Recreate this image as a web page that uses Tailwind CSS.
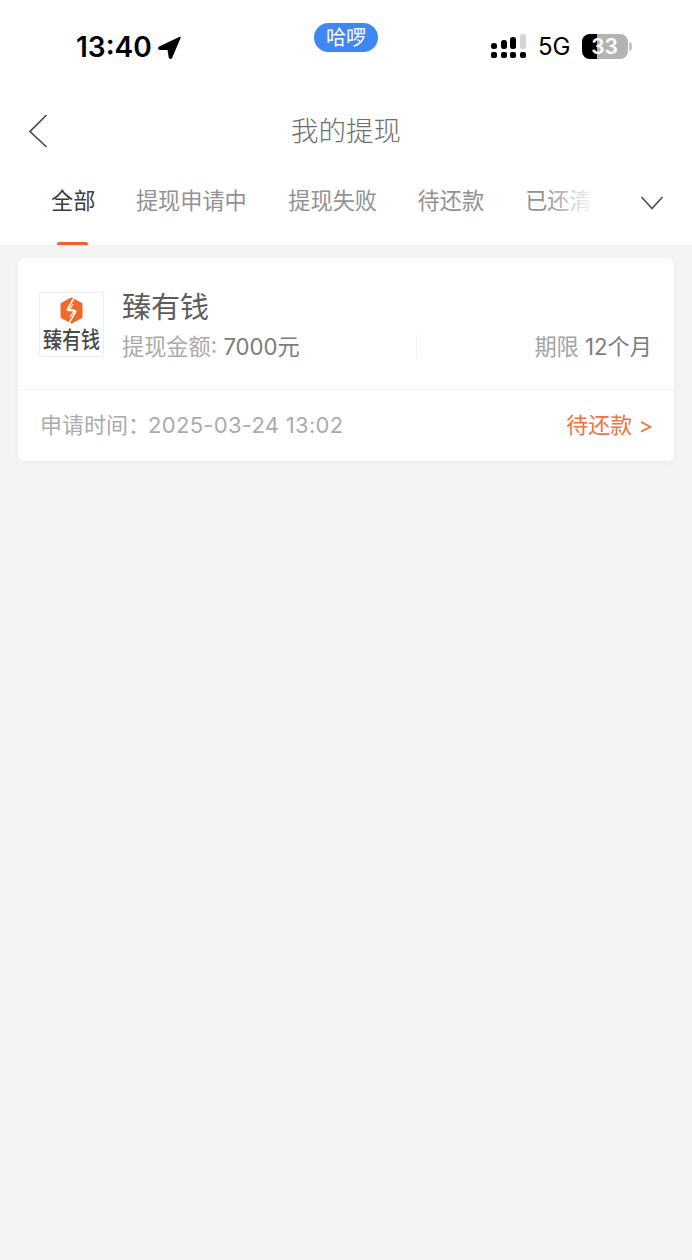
<!DOCTYPE html>
<html lang="zh-CN">
<head>
    <meta charset="UTF-8">
    <title>我的提现</title>
    <script src="https://cdn.jsdelivr.net/npm/@tailwindcss/browser@4"></script>
</head>
<body class="bg-[#f4f4f4] font-['Inter','Noto_Sans_CJK_SC',sans-serif]">
    <div class="w-[692px] h-[1260px] overflow-hidden flex flex-col">
        <!-- Status bar -->
        <div class="bg-white h-[90px] shrink-0 flex items-start relative">
            <div class="flex items-center ml-[76px] mt-[29px] gap-[6px]">
                <span class="text-[28px] leading-[36px] font-semibold text-black">13:40</span>
                <svg width="23" height="23" viewBox="0 0 23 23"><path d="M22 1.5 L1 11.5 Q0.5 13 2 13.2 L10.2 13.3 L11.5 21.5 Q12.5 23 13.5 21.5 Z" fill="#000" stroke="#000" stroke-width="1.5" stroke-linejoin="round"/></svg>
            </div>
            <div class="absolute left-[314px] top-[23px] w-[64px] h-[29px] rounded-full bg-[#3f87f5] flex items-center justify-center text-white text-[20px] leading-none">哈啰</div>
            <div class="absolute left-[491px] top-[34px] flex items-center">
                <svg width="36" height="25" viewBox="0 0 36 25" fill="#000">
                    <rect x="0" y="9" width="6" height="6" rx="2.5"/>
                    <rect x="10" y="6" width="6" height="9" rx="2.5"/>
                    <rect x="19" y="3" width="6" height="12" rx="2.5"/>
                    <rect x="29" y="0" width="6" height="15" rx="2.5" fill="#d4d4d4"/>
                    <rect x="0" y="18" width="6" height="6" rx="2"/>
                    <rect x="10" y="18" width="6" height="6" rx="2"/>
                    <rect x="19" y="18" width="6" height="6" rx="2"/>
                    <rect x="29" y="18" width="6" height="6" rx="2"/>
                </svg>
                <span class="ml-[11px] text-[24px] leading-[25px] text-black font-normal">5G</span>
                <div class="ml-[11px] relative w-[46px] h-[25px] rounded-[8px] bg-[#b3b3b3] overflow-hidden">
                    <div class="w-[15px] h-full bg-black"></div>
                    <span class="absolute inset-0 flex items-center justify-center text-white text-[21px] font-semibold leading-none">33</span>
                </div>
                <div class="ml-[1px] w-[3px] h-[9px] rounded-r-full bg-[#c4c4c4]"></div>
            </div>
        </div>

        <!-- Nav -->
        <div class="bg-white h-[76px] shrink-0 relative flex items-center justify-center">
            <svg class="absolute left-[28px] top-[23px]" width="20" height="36" viewBox="0 0 20 36" fill="none"><path d="M18.5 2 L2 18.5 L18.5 34" stroke="#4a4a4a" stroke-width="1.7"/></svg>
            <span class="text-[27.5px] leading-[36px] text-[#6e6e72] mt-[6px] font-light">我的提现</span>
        </div>

        <!-- Tabs -->
        <div class="bg-white h-[80px] shrink-0 relative border-b border-[#efefef] flex items-start pl-[51px] pt-[19px] text-[22.2px] leading-[32px] text-[#929292] overflow-hidden">
            <div class="relative h-[61px] text-[#3c3c3c]">
                全部
                <div class="absolute left-[6px] bottom-0 w-[31px] h-[4px] rounded-t-[2px] bg-[#f0622d]"></div>
            </div>
            <span class="ml-[40.5px]">提现申请中</span>
            <span class="ml-[41.5px]">提现失败</span>
            <span class="ml-[40.5px]">待还款</span>
            <span class="ml-[41px] whitespace-nowrap">已还清</span>
            <div class="absolute left-[545px] top-0 w-[50px] h-full bg-gradient-to-r from-white/0 to-white"></div>
            <div class="absolute left-[595px] top-0 w-[97px] h-full bg-white flex items-start justify-center pl-[17px] pt-[29px]">
                <svg width="24" height="16" viewBox="0 0 24 16" fill="none"><path d="M1.5 2 L12 13.5 L22.5 2" stroke="#555555" stroke-width="1.8"/></svg>
            </div>
        </div>

        <!-- Card -->
        <div class="mx-[18px] mt-[12px] h-[203px] bg-white rounded-[6px] shadow-[0_1px_6px_rgba(0,0,0,0.04)] flex flex-col">
            <div class="h-[132px] border-b border-[#f3f3f3] flex items-start pl-[21px] pr-[22px] pt-[34px]">
                <div class="w-[65px] h-[65px] shrink-0 border border-[#eeeeee] rounded-[3px] flex flex-col items-center pt-[4px] overflow-hidden">
                    <svg width="23" height="27" viewBox="0 0 23 27">
                        <path d="M11.5 1.5 L21.5 7 V20 L11.5 25.5 L1.5 20 V7 Z" fill="#ee6a2c" stroke="#ee6a2c" stroke-width="2" stroke-linejoin="round"/>
                        <path d="M14.5 0 L7.5 12 Q7 13.5 9 13.5 L14 13.5 Q16 13.5 15.5 15 L8.5 27" fill="none" stroke="#fff" stroke-width="1.6"/>
                        <path d="M13 7.5 L8 13 L14 14 L10 19.5 L15.5 13.5 L9.5 12.5 Z" fill="#fff" stroke="#fff" stroke-linejoin="round"/>
                    </svg>
                    <span class="text-[19px] leading-[24px] mt-[5px] font-medium text-[#4a4a4a] whitespace-nowrap scale-y-[1.18]">臻有钱</span>
                </div>
                <div class="ml-[18px] flex-1 min-w-0 mt-[-3px]">
                    <div class="text-[29px] leading-[38px] text-[#5c5c5c]">臻有钱</div>
                    <div class="flex items-center mt-[4px] text-[22.2px] leading-[32px]">
                        <span class="text-[#aaaaaa]">提现金额: <span class="text-[#7c7c7c]">7000元</span></span>
                        <div class="ml-[116px] w-px h-[24px] bg-[#f3f3f3]"></div>
                        <span class="ml-auto text-[#a4a4a4]">期限 <span class="text-[#7c7c7c]">12个月</span></span>
                    </div>
                </div>
            </div>
            <div class="flex-1 flex items-center justify-between pl-[22px] pr-[21px] text-[22px] leading-[32px] pb-[2px]">
                <span class="text-[#ababab]">申请时间：<span class="ml-[-2px] tracking-[0.3px]">2025-03-24 13:02</span></span>
                <span class="text-[#f0733f]">待还款 &gt;</span>
            </div>
        </div>
    </div>
</body>
</html>
